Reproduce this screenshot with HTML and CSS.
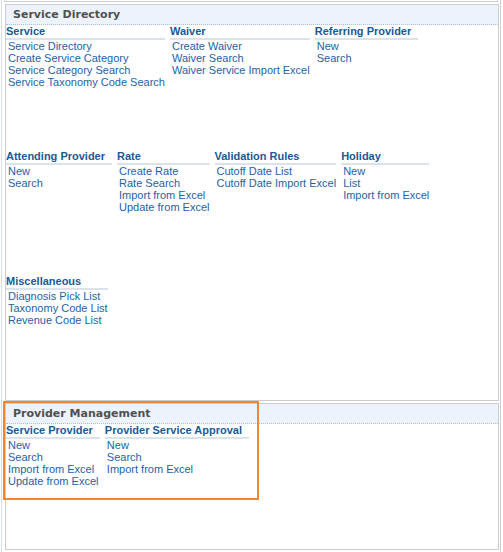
FILE: index.html
```html
<!DOCTYPE html>
<html>
<head>
<meta charset="utf-8">
<link rel="stylesheet" href="styles.css">
</head>
<body>
<div class="frame">
  <div class="prev"></div>
  <section class="panel">
    <div class="panel-head">Service Directory</div>
    <div class="panel-body">
      <div class="group">
        <div class="group-title">Service</div>
        <a class="link" href="#">Service Directory</a>
        <a class="link" href="#">Create Service Category</a>
        <a class="link" href="#">Service Category Search</a>
        <a class="link" href="#">Service Taxonomy Code Search</a>
      </div>
      <div class="group">
        <div class="group-title">Waiver</div>
        <a class="link" href="#">Create Waiver</a>
        <a class="link" href="#">Waiver Search</a>
        <a class="link" href="#">Waiver Service Import Excel</a>
      </div>
      <div class="group">
        <div class="group-title">Referring Provider</div>
        <a class="link" href="#">New</a>
        <a class="link" href="#">Search</a>
      </div>
      <div class="group">
        <div class="group-title">Attending Provider</div>
        <a class="link" href="#">New</a>
        <a class="link" href="#">Search</a>
      </div>
      <div class="group">
        <div class="group-title">Rate</div>
        <a class="link" href="#">Create Rate</a>
        <a class="link" href="#">Rate Search</a>
        <a class="link" href="#">Import from Excel</a>
        <a class="link" href="#">Update from Excel</a>
      </div>
      <div class="group">
        <div class="group-title">Validation Rules</div>
        <a class="link" href="#">Cutoff Date List</a>
        <a class="link" href="#">Cutoff Date Import Excel</a>
      </div>
      <div class="group">
        <div class="group-title">Holiday</div>
        <a class="link" href="#">New</a>
        <a class="link" href="#">List</a>
        <a class="link" href="#">Import from Excel</a>
      </div>
      <div class="group">
        <div class="group-title">Miscellaneous</div>
        <a class="link" href="#">Diagnosis Pick List</a>
        <a class="link" href="#">Taxonomy Code List</a>
        <a class="link" href="#">Revenue Code List</a>
      </div>
    </div>
  </section>
  <section class="panel panel-second">
    <div class="panel-head">Provider Management</div>
    <div class="panel-body">
      <div class="group">
        <div class="group-title">Service Provider</div>
        <a class="link" href="#">New</a>
        <a class="link" href="#">Search</a>
        <a class="link" href="#">Import from Excel</a>
        <a class="link" href="#">Update from Excel</a>
      </div>
      <div class="group">
        <div class="group-title">Provider Service Approval</div>
        <a class="link" href="#">New</a>
        <a class="link" href="#">Search</a>
        <a class="link" href="#">Import from Excel</a>
      </div>
    </div>
  </section>
  <div class="highlight"></div>
</div>
</body>
</html>
```

FILE: styles.css
```css
html, body {
  margin: 0;
  padding: 0;
  background: #ffffff;
}

.frame {
  position: relative;
  box-sizing: border-box;
  margin-left: 1px;
  width: 500px;
  height: 552px;
  border-left: 1px solid #d6dee6;
  border-right: 1px solid #cdcdcd;
  font-family: "Liberation Sans", Arial, sans-serif;
  font-size: 11px;
}

.prev {
  margin-left: 2px;
  width: 492px;
  height: 1px;
  border: 1px solid #cccccc;
  border-top: 0;
}

.panel {
  margin: 2px 0 0 3px;
  width: 494px;
  box-sizing: border-box;
  border: 1px solid #cccccc;
}

.panel-head {
  height: 18px;
  padding: 1px 0 0 7px;
  line-height: 18px;
  background: #ecf3fd;
  border-bottom: 1px dotted #b3bfcc;
  font-family: "DejaVu Sans", Verdana, sans-serif;
  font-weight: bold;
  font-size: 11px;
  color: #505050;
}

.panel-body {
  display: flex;
  flex-wrap: wrap;
  column-gap: 5px;
  align-content: flex-start;
}

.group {
  height: 125px;
  display: flex;
  flex-direction: column;
  align-items: stretch;
}

.group-title {
  font-weight: bold;
  line-height: 13px;
  padding-right: 7px;
  color: #185a97;
  border-bottom: 2px solid #dae3eb;
  white-space: nowrap;
}

.link {
  display: block;
  padding-left: 2px;
  line-height: 12px;
  color: #1e62a6;
  text-decoration: none;
  white-space: nowrap;
}

.highlight {
  position: absolute;
  left: 1px;
  top: 401px;
  width: 252px;
  height: 95px;
  border: 2px solid #f0872e;
}
```
